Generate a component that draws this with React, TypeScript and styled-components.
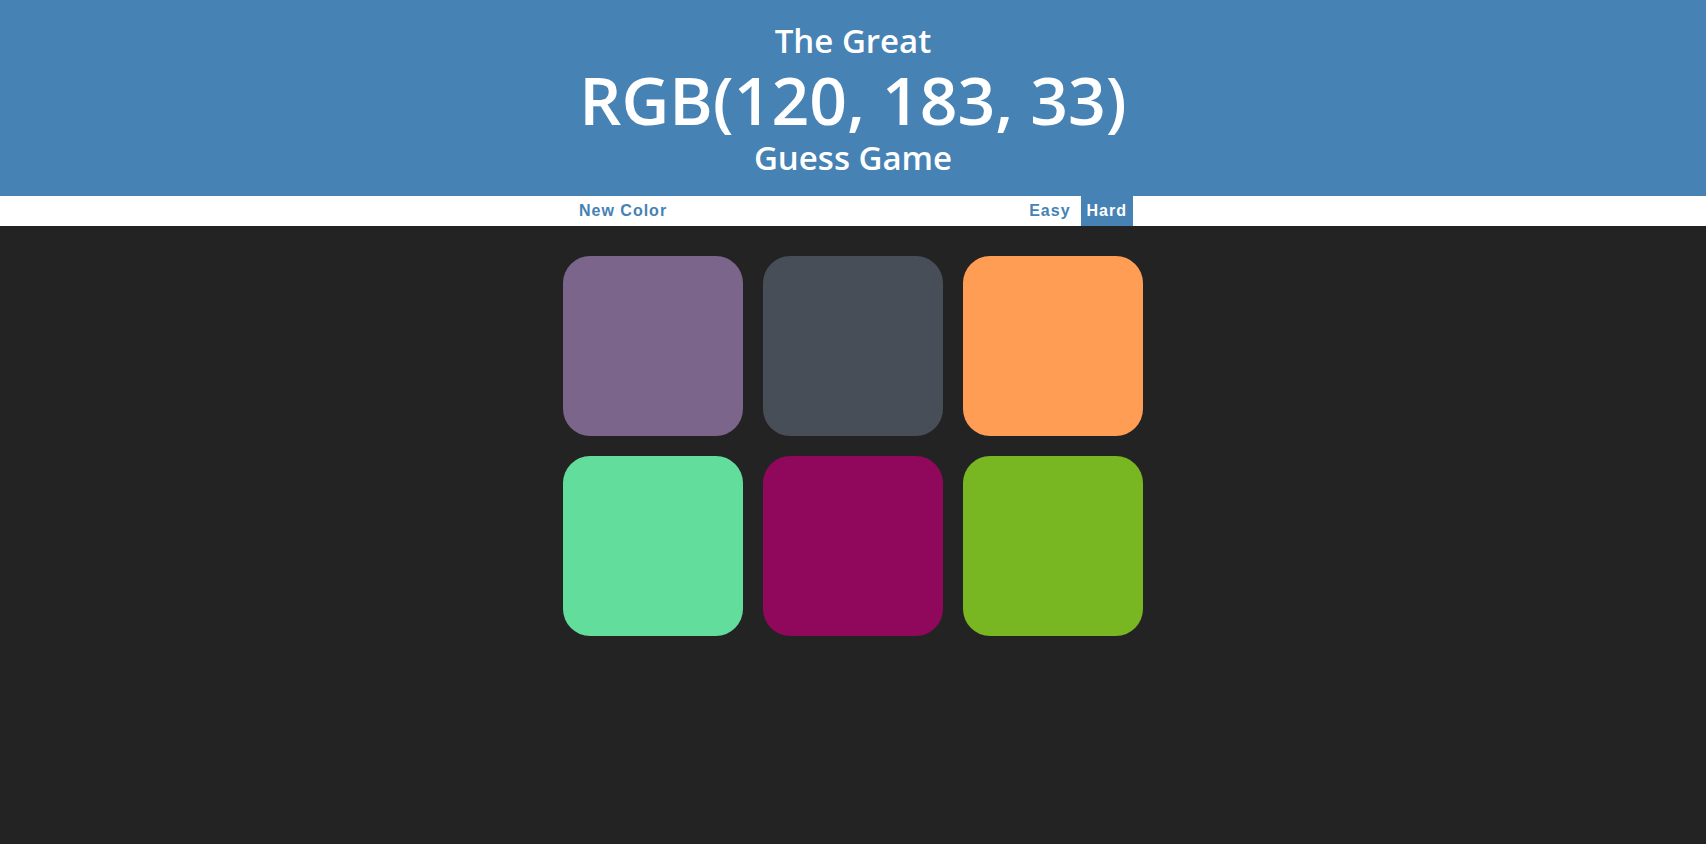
import React from "react";
import styled, { createGlobalStyle } from "styled-components";

const GlobalStyle = createGlobalStyle`
  html, body {
    margin: 0;
    padding: 0;
    background: #232323;
    font-family: "Open Sans", "Liberation Sans", sans-serif;
  }
`;

const Header = styled.header`
  background: steelblue;
  color: #ffffff;
  text-align: center;
  height: 196px;
  box-sizing: border-box;
  padding-top: 21px;
  margin: 0;
`;

const Line = styled.div<{ $big?: boolean }>`
  font-family: "Open Sans", "Liberation Sans", sans-serif;
  font-weight: 600;
  font-size: ${(p) => (p.$big ? "66px" : "33px")};
  line-height: ${(p) => (p.$big ? "78px" : "39px")};
`;

const Stripe = styled.nav`
  background: #ffffff;
  height: 30px;
`;

const StripeInner = styled.div`
  width: 560px;
  height: 100%;
  margin: 0 auto;
  display: flex;
  align-items: stretch;
`;

const Spacer = styled.div`
  flex: 1;
`;

const Btn = styled.button<{ $selected?: boolean }>`
  border: none;
  outline: none;
  margin: 0;
  padding: 0 6px;
  height: 100%;
  background: ${(p) => (p.$selected ? "steelblue" : "transparent")};
  color: ${(p) => (p.$selected ? "#ffffff" : "steelblue")};
  font-family: "Liberation Sans", Arial, sans-serif;
  font-weight: 700;
  font-size: 16px;
  letter-spacing: 1px;
  cursor: pointer;
`;

const ModeGroup = styled.div`
  display: flex;
  gap: 4px;
`;

const Board = styled.main`
  width: 600px;
  margin: 20px auto;
  padding: 10px;
  box-sizing: border-box;
  display: grid;
  grid-template-columns: repeat(3, 180px);
  grid-auto-rows: 180px;
  gap: 20px;
`;

const Square = styled.div<{ $color: string }>`
  background: ${(p) => p.$color};
  border-radius: 15%;
`;

const colors = [
  "rgb(123, 101, 138)",
  "rgb(71, 78, 87)",
  "rgb(255, 157, 84)",
  "rgb(99, 221, 156)",
  "rgb(143, 8, 92)",
  "rgb(120, 183, 33)",
];

export default function App() {
  return (
    <>
      <GlobalStyle />
      <Header>
        <Line>The Great</Line>
        <Line $big>RGB(120, 183, 33)</Line>
        <Line>Guess Game</Line>
      </Header>
      <Stripe>
        <StripeInner>
          <Btn>New Color</Btn>
          <Spacer />
          <ModeGroup>
            <Btn>Easy</Btn>
            <Btn $selected>Hard</Btn>
          </ModeGroup>
        </StripeInner>
      </Stripe>
      <Board>
        {colors.map((c) => (
          <Square key={c} $color={c} />
        ))}
      </Board>
    </>
  );
}
